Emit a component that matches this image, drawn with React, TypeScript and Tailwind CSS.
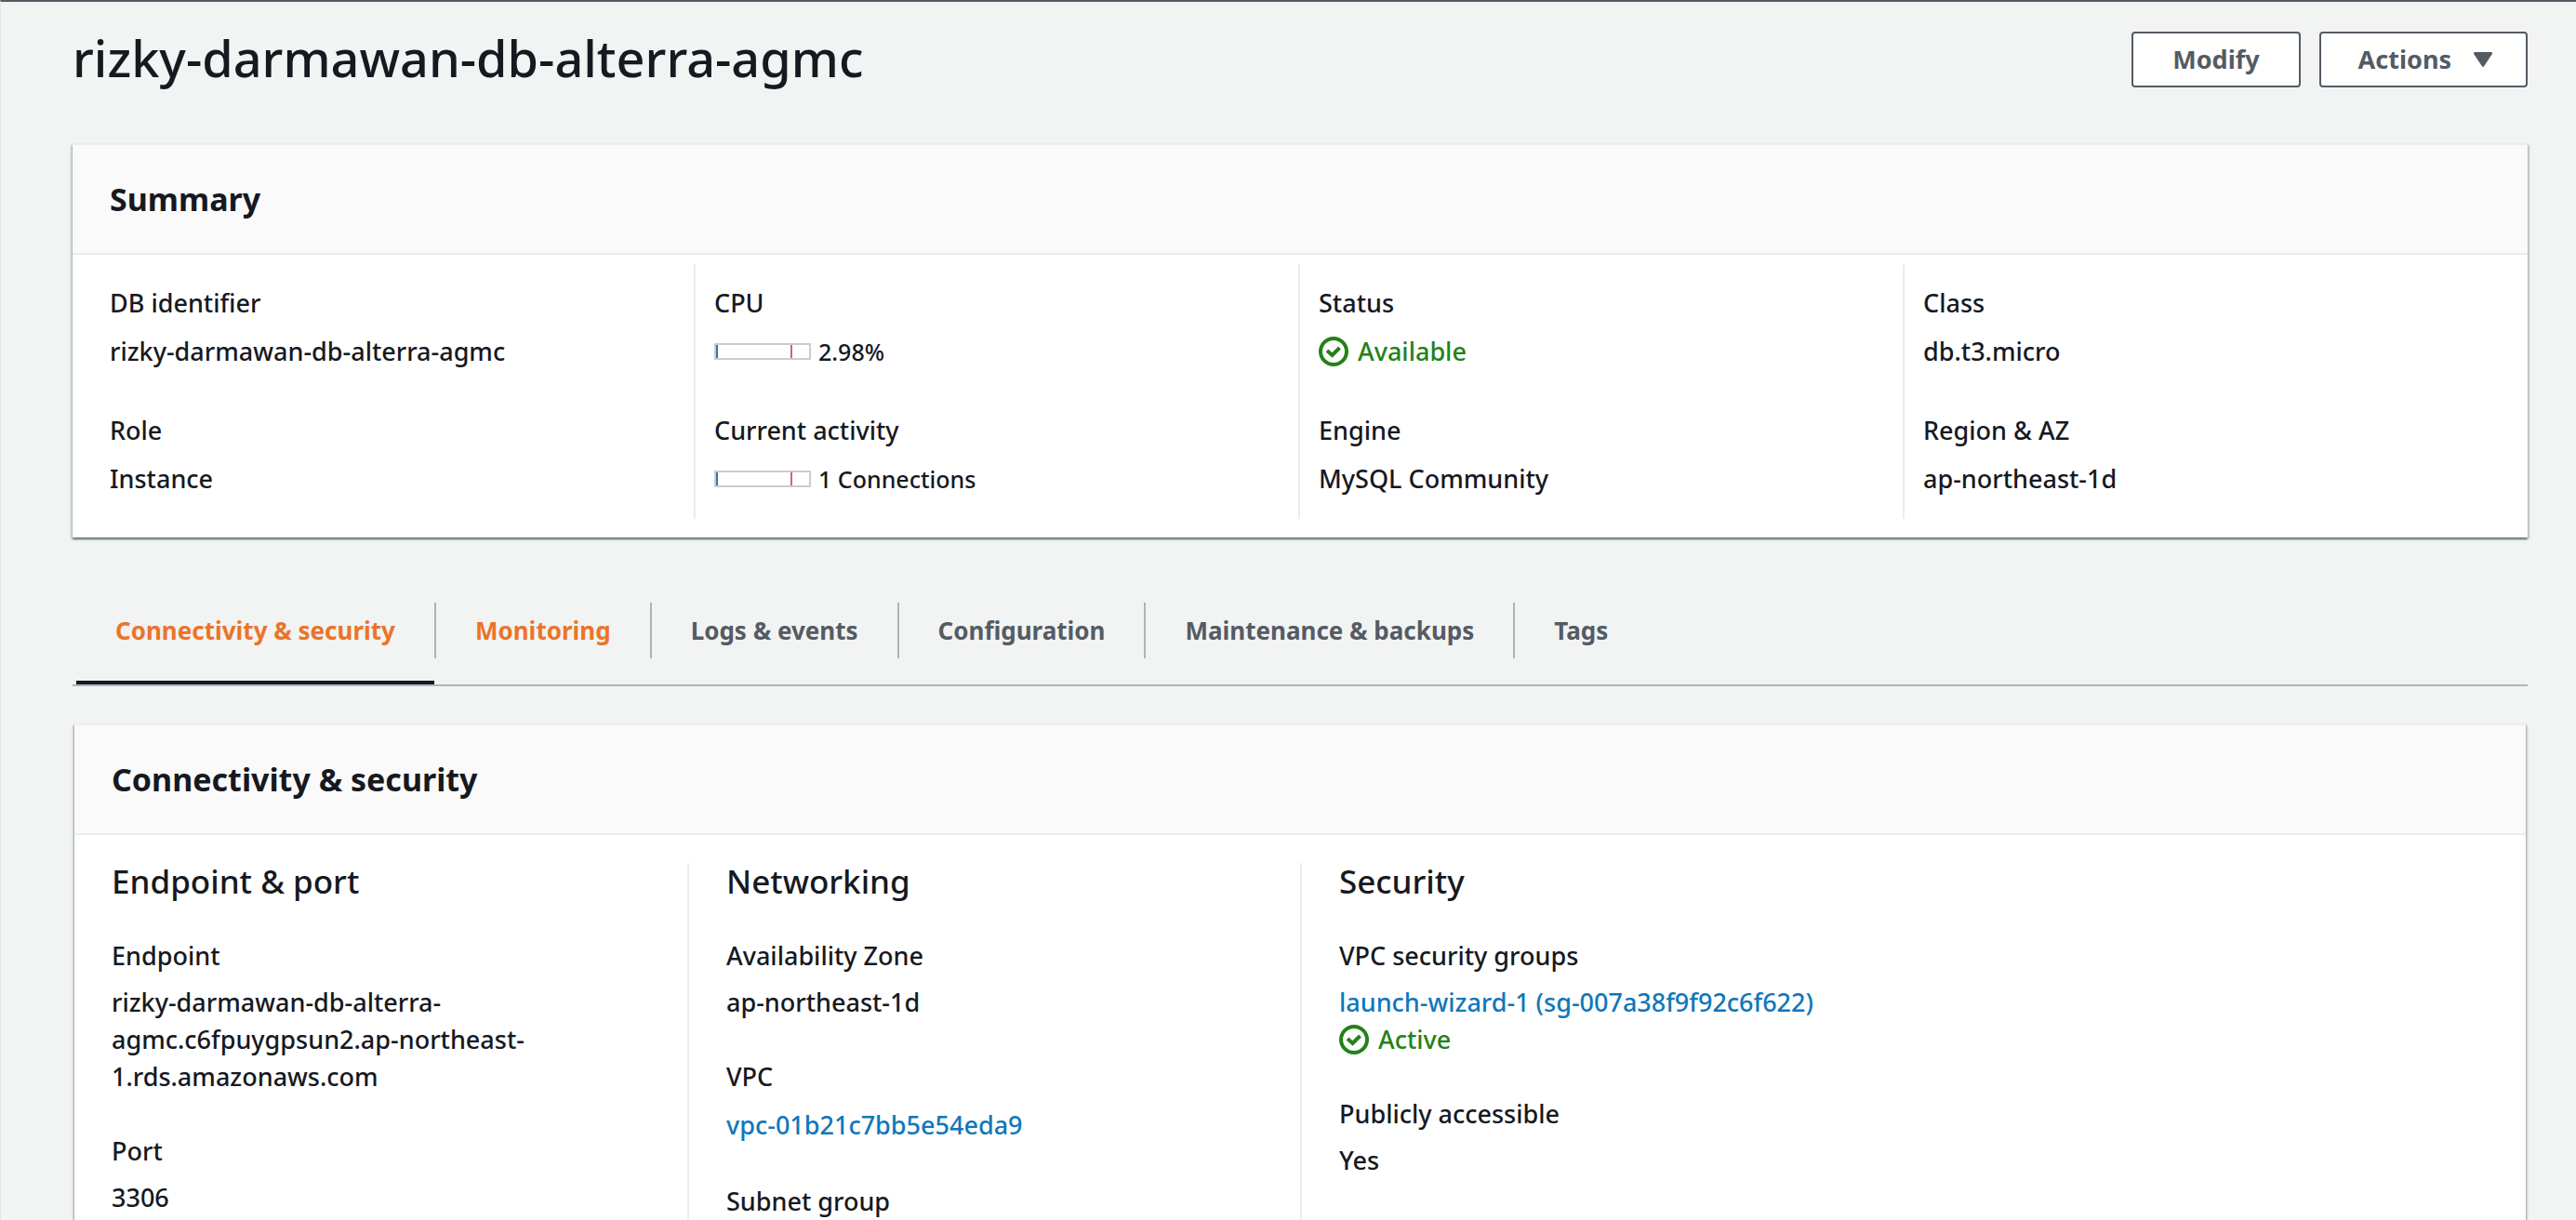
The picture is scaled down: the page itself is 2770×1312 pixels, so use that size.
import { useState, type ReactNode } from "react";

const tabs = [
  "Connectivity & security",
  "Monitoring",
  "Logs & events",
  "Configuration",
  "Maintenance & backups",
  "Tags",
];

function StatusIcon() {
  return (
    <svg viewBox="0 0 32 32" className="size-8 shrink-0" fill="none" stroke="currentColor" aria-hidden="true">
      <circle cx="16" cy="16" r="14" strokeWidth="4" />
      <path d="M9 15l5.5 5L22.5 12" strokeWidth="4" />
    </svg>
  );
}

function Status({ children }: { children: ReactNode }) {
  return (
    <span className="flex items-center gap-[10px] text-[#238217]">
      <StatusIcon />
      {children}
    </span>
  );
}

function Meter({ children }: { children: ReactNode }) {
  return (
    <span className="flex items-center gap-2 text-[25px]">
      <span className="flex h-[18px] w-[104px] justify-between border-2 border-[#ccc] pr-[18px]">
        <span className="w-0.5 bg-[#4a6f94]" />
        <span className="w-0.5 bg-[#dd6066]" />
      </span>
      {children}
    </span>
  );
}

function Card({ title, className, children }: { title: string; className: string; children: ReactNode }) {
  return (
    <section
      className={`border-t-2 border-[#eaeded] bg-white shadow-[0_2px_2px_0_rgba(0,28,36,0.45),2px_2px_2px_0_rgba(0,28,36,0.15),-2px_2px_2px_0_rgba(0,28,36,0.15)] ${className}`}
    >
      <header className="border-b-2 border-[#eaeded] bg-[#fafafa] px-10 py-9">
        <h2 className="text-[34px] leading-[44px] font-bold">{title}</h2>
      </header>
      {children}
    </section>
  );
}

function SummaryItem({ label, children }: { label: string; children: ReactNode }) {
  return (
    <div className="flex flex-col gap-3">
      <dt>{label}</dt>
      <dd>{children}</dd>
    </div>
  );
}

function SummaryColumn({ children }: { children: ReactNode }) {
  return (
    <dl className="flex flex-col gap-[45px] border-r-2 border-[#eaeded] px-5 pt-[22px] pb-[23px] last:border-r-0">
      {children}
    </dl>
  );
}

function Detail({ label, children }: { label: string; children: ReactNode }) {
  return (
    <div className="flex flex-col gap-[10px]">
      <dt>{label}</dt>
      <dd>{children}</dd>
    </div>
  );
}

function DetailColumn({ title, children }: { title: string; children: ReactNode }) {
  return (
    <div className="flex flex-col gap-10 border-l-2 border-[#eaeded] px-10 pb-10 first:border-l-0">
      <h3 className="text-[35px] leading-10">{title}</h3>
      <dl className="flex flex-col gap-10">{children}</dl>
    </div>
  );
}

export default function App() {
  const [active, setActive] = useState(0);
  const [hovered, setHovered] = useState(1);

  return (
    <main className="h-screen overflow-hidden border-t-2 border-l border-t-[#545b64] border-l-[#e4e7e7] bg-[#f2f3f3] pt-7 pr-[52px] pl-[77px] font-['Noto_Sans',sans-serif] text-[27px] leading-10 font-medium text-[#16191f]">
      <header className="flex items-center justify-between">
        <h1 className="pb-1 text-[54px] leading-[64px]">rizky-darmawan-db-alterra-agmc</h1>
        <div className="flex gap-5 font-bold text-[#545b64]">
          <button className="rounded-sm border-2 border-[#545b64] bg-white px-[42px] py-2">Modify</button>
          <button className="flex items-center gap-6 rounded-sm border-2 border-[#545b64] bg-white py-2 pr-9 pl-10">
            Actions
            <svg viewBox="0 0 20 16" className="h-4 w-5" fill="currentColor" aria-hidden="true">
              <path d="M1.5 0h17a1.4 1.4 0 0 1 1.2 2.3l-8.6 13a1.4 1.4 0 0 1-2.2 0L.3 2.3A1.4 1.4 0 0 1 1.5 0z" />
            </svg>
          </button>
        </div>
      </header>

      <Card title="Summary" className="mt-14">
        <div className="grid grid-cols-4 px-5 pt-[10px] pb-5">
          <SummaryColumn>
            <SummaryItem label="DB identifier">rizky-darmawan-db-alterra-agmc</SummaryItem>
            <SummaryItem label="Role">Instance</SummaryItem>
          </SummaryColumn>
          <SummaryColumn>
            <SummaryItem label="CPU">
              <Meter>2.98%</Meter>
            </SummaryItem>
            <SummaryItem label="Current activity">
              <Meter>1 Connections</Meter>
            </SummaryItem>
          </SummaryColumn>
          <SummaryColumn>
            <SummaryItem label="Status">
              <Status>Available</Status>
            </SummaryItem>
            <SummaryItem label="Engine">MySQL Community</SummaryItem>
          </SummaryColumn>
          <SummaryColumn>
            <SummaryItem label="Class">db.t3.micro</SummaryItem>
            <SummaryItem label="Region & AZ">ap-northeast-1d</SummaryItem>
          </SummaryColumn>
        </div>
      </Card>

      <div role="tablist" className="mt-[70px] flex border-b-2 border-[#aab7b8] pl-1">
        {tabs.map((tab, i) => (
          <div key={tab} className="flex items-start">
            <button
              role="tab"
              aria-selected={i === active}
              onClick={() => setActive(i)}
              onMouseEnter={() => setHovered(i)}
              className={`border-b-4 px-[42px] pt-[10px] pb-[34px] text-[26px] leading-10 font-bold ${
                i === active ? "border-[#16191f]" : "border-transparent"
              } ${i === active || i === hovered ? "text-[#eb7428]" : "text-[#545b64]"}`}
            >
              {tab}
            </button>
            {i < tabs.length - 1 && <span className="h-[60px] w-0.5 bg-[#aab7b8]" />}
          </div>
        ))}
      </div>

      <Card title="Connectivity & security" className="mx-0.5 mt-10">
        <div className="grid grid-cols-4 pt-[30px]">
          <DetailColumn title="Endpoint & port">
            <Detail label="Endpoint">rizky-darmawan-db-alterra-agmc.c6fpuygpsun2.ap-northeast-1.rds.amazonaws.com</Detail>
            <Detail label="Port">3306</Detail>
          </DetailColumn>
          <DetailColumn title="Networking">
            <Detail label="Availability Zone">ap-northeast-1d</Detail>
            <Detail label="VPC">
              <a href="#vpc" className="block leading-[44px] text-[#1077bb]">
                vpc-01b21c7bb5e54eda9
              </a>
            </Detail>
            <Detail label="Subnet group">{null}</Detail>
          </DetailColumn>
          <DetailColumn title="Security">
            <Detail label="VPC security groups">
              <a href="#security-group" className="block text-[#1077bb]">
                launch-wizard-1 (sg-007a38f9f92c6f622)
              </a>
              <Status>Active</Status>
            </Detail>
            <Detail label="Publicly accessible">Yes</Detail>
          </DetailColumn>
        </div>
      </Card>
    </main>
  );
}
